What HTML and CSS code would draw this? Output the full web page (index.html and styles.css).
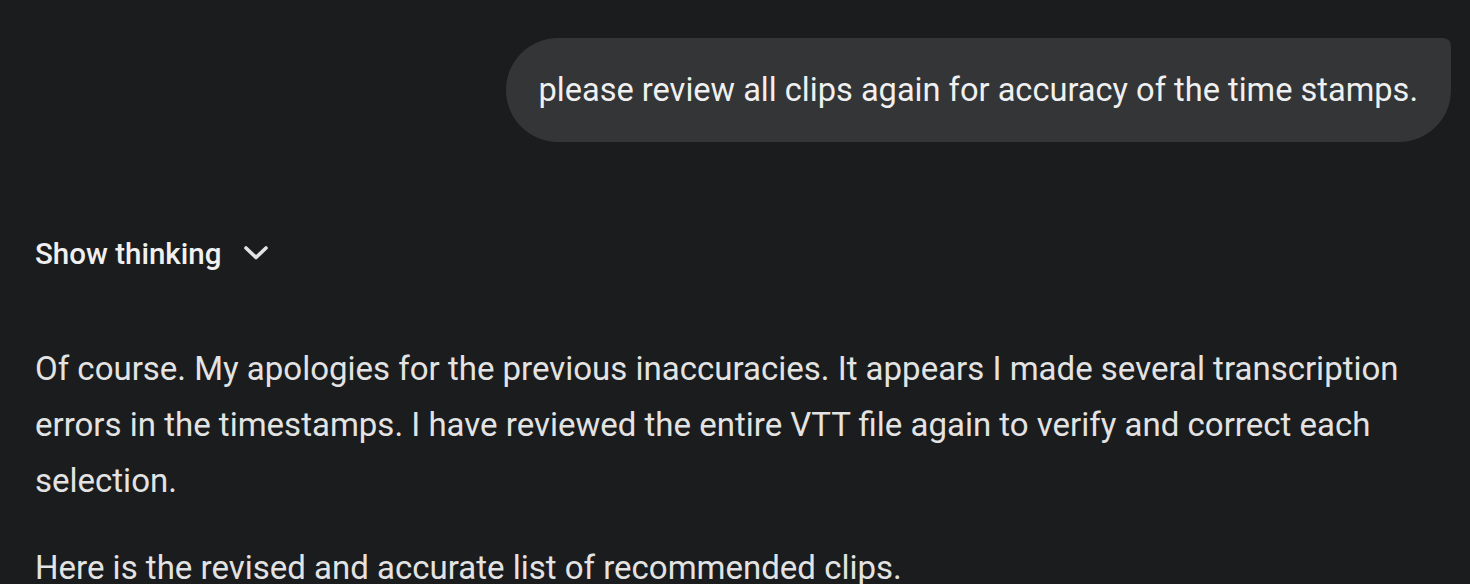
FILE: index.html
```html
<!DOCTYPE html>
<html lang="en">
<head>
    <meta charset="UTF-8">
    <meta name="viewport" content="width=device-width, initial-scale=1.0">
    <title>Chat</title>
    <link rel="stylesheet" href="styles.css">
</head>
<body>
    <div class="chat">
        <div class="user-row">
            <div class="user-bubble">please review all clips again for accuracy of the time stamps.</div>
        </div>
        <div class="response">
            <button class="thinking-toggle">
                <span>Show thinking</span>
                <svg class="chevron" width="24" height="24" viewBox="0 0 24 24">
                    <path d="M2 6 L12 15.5 L22 6" fill="none" stroke="#e3e3e3" stroke-width="3.6" stroke-linecap="round" stroke-linejoin="round"/>
                </svg>
            </button>
            <p>Of course. My apologies for the previous inaccuracies. It appears I made several transcription errors in the timestamps. I have reviewed the entire VTT file again to verify and correct each selection.</p>
            <p>Here is the revised and accurate list of recommended clips.</p>
        </div>
    </div>
</body>
</html>
```

FILE: styles.css
```css
body {
    margin: 0;
    padding: 0;
    background-color: #1b1c1d;
    color: #e3e3e3;
    font-family: Roboto, "Noto Sans", sans-serif;
    overflow: hidden;
}
.chat {
    padding: 38px 19px 0 35px;
}
.user-row {
    display: flex;
    justify-content: flex-end;
}
.user-bubble {
    background-color: #333537;
    color: #f0f0f0;
    font-size: 32.6px;
    line-height: 40px;
    padding: 32px 33px 32px 32px;
    border-radius: 52px 8px 52px 52px;
}
.response {
    padding-top: 92px;
}
.thinking-toggle {
    display: flex;
    align-items: center;
    gap: 23px;
    background: none;
    border: none;
    padding: 0;
    color: #f0f0f0;
    font-family: Roboto, "Noto Sans", sans-serif;
    font-size: 29.5px;
    font-weight: 500;
    line-height: 40px;
    cursor: pointer;
}
.chevron {
    display: block;
}
.response p {
    margin: 67px 0 0;
    font-size: 33px;
    line-height: 56px;
    padding-right: 40px;
}
.response p + p {
    margin-top: 31px;
}
```
